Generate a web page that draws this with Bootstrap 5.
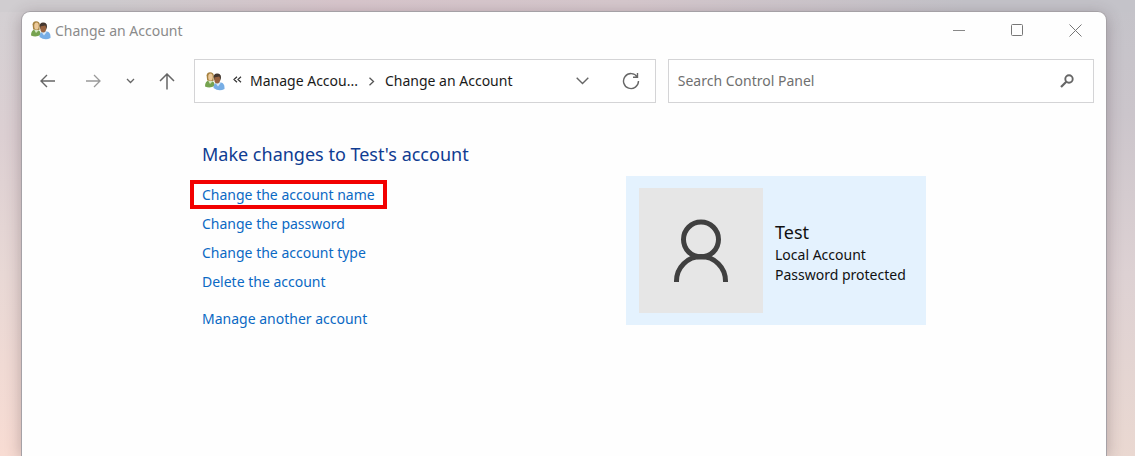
<!DOCTYPE html>
<html lang="en">
<head>
<meta charset="utf-8">
<meta name="viewport" content="width=device-width, initial-scale=1">
<title>Change an Account</title>
<link href="https://cdn.jsdelivr.net/npm/bootstrap@5.3.0/dist/css/bootstrap.min.css" rel="stylesheet">
<style>
  body {
    font: 14px/20px "Noto Sans", "Open Sans", sans-serif;
    color: #1a1a1a;
    background:
      linear-gradient(to bottom, #c4c3c9 0, #cbc5cb 25%, #ddd1d3 60%, #ead8d1 100%) right / 50% 100% no-repeat,
      linear-gradient(to bottom, #d3d0d3 0, #dccfd2 30%, #e8d8d5 60%, #f8dcd3 100%);
  }
  .desktop { min-height: 100vh; padding: 11px 28px 0 21px; background: linear-gradient(to right, #d0cdd0 10%, #d8c6cc 30%, #d6c8cd 55%, #c4c3c9 85%) top / 100% 12px no-repeat; }
  .app-window { background: #fefefe; border: 1px solid #a5a1a6; border-bottom: 0; border-radius: 9px 9px 0 0; box-shadow: 0 3px 16px rgba(60,40,50,.3); }
  .title-bar { height: 37px; padding: 0 2px 0 9px; color: #8b8b8b; }
  .tool-btn { border: 0; background: none; padding: 0; color: #666; display: flex; align-items: center; justify-content: center; height: 36px; }
  .tool-btn:hover { background: #eee; }
  .win-btn { width: 58px; }
  .nav-bar { padding: 10px 12px 0 8px; }
  .nav-btn { width: 36px; flex: none; }
  .nav-group { margin-right: 9px; gap: 1px; }
  .field-box { height: 44px; border: 1px solid #d4d4d6; background: #fff; min-width: 0; }
  .address-box { flex: 462 1 0; padding: 0 6px 0 10px; }
  .address-box a { color: #1a1a1a; }
  .drop-btn { margin-right: 12px; }
  .search-box { flex: 424 1 0; margin-left: 12px; padding: 0 8px 0 9px; }
  .search-box input { border: 0; outline: 0; background: none; min-width: 0; color: #333; padding: 0; }
  .search-box input::placeholder { color: #707070; opacity: 1; }
  .content-area { padding: 38px 24px 24px 168px; }
  .tasks { width: 436px; }
  .tasks h1 { font-size: 18px; line-height: 26px; color: #0f3c92; padding-left: 12px; margin: 0 0 13px; font-weight: 400; }
  .task-link { color: #0b69c4; line-height: 21px; padding: 0 8px; border: 4px solid transparent; }
  .task-link.marked { border-color: #f20000; }
  .tile { width: 300px; padding: 12px 13px; margin-top: 35px; background: #e4f2fe; color: #111; }
  .avatar { width: 124px; height: 125px; background: #e6e6e6; flex: none; }
  .account-name { font-size: 18px; line-height: 26px; }
  .account-info { padding: 2px 0 0 12px; }
</style>
</head>
<body>
<svg class="d-none" aria-hidden="true">
  <symbol id="users" viewBox="0 0 20 19">
    <path d="M0 14.500Q0 9 4 8.500L7 9Q10 10 9.500 14Q5 16.500 0 14.500z" fill="#76a350"/>
    <path d="M3 8.500L5 12 8 9z" fill="#d6e8c2"/>
    <path d="M1.600 3.500Q2 .3 5 .3Q8.800 .3 8.800 4L8.500 9 2.200 8.500z" fill="#a5813f"/>
    <ellipse cx="5.500" cy="5" rx="2.300" ry="3.500" fill="#ecc999"/>
    <path d="M8.500 16Q8.500 11 12 10.700L16 10.500Q19.800 11 19.500 17Q14 20 8.500 16z" fill="#77aee6"/>
    <path d="M10.500 11L13 14.500 16 10.500z" fill="#d9eafa"/>
    <path d="M8.600 5Q8.800 1.500 12 1.500Q16.200 1.400 16 6L15 9 9.500 8z" fill="#44372f"/>
    <ellipse cx="12.200" cy="7.500" rx="2.900" ry="3.900" fill="#986340"/>
    <path d="M9.300 5Q12 5.500 15.500 4L14.500 2.500 10.500 2.300z" fill="#44372f"/>
  </symbol>
</svg>
<div class="desktop d-flex">
  <main class="app-window flex-grow-1">
    <header class="title-bar d-flex align-items-center">
      <svg class="me-1" width="20" height="19" aria-hidden="true"><use href="#users"/></svg>
      <span class="flex-grow-1">Change an Account</span>
      <button type="button" class="tool-btn win-btn" aria-label="Minimize"><svg width="13" height="13" stroke="#888"><path d="M0 6.500H12"/></svg></button>
      <button type="button" class="tool-btn win-btn" aria-label="Maximize"><svg width="13" height="13" fill="none" stroke="#777"><rect x=".5" y=".5" width="11" height="11" rx="1"/></svg></button>
      <button type="button" class="tool-btn win-btn" aria-label="Close"><svg width="13" height="13" stroke="#777"><path d="M.5 .5L12.500 12.500M12.500 .5L.5 12.500"/></svg></button>
    </header>
    <nav class="nav-bar d-flex align-items-center" aria-label="Navigation">
      <div class="nav-group d-flex flex-shrink-0">
        <button type="button" class="tool-btn nav-btn" aria-label="Back"><svg width="16" height="14" fill="none" stroke="#666" stroke-width="1.400"><path d="M15 7H1.500M7 1L1 7L7 13"/></svg></button>
        <button type="button" class="tool-btn nav-btn ms-2" aria-label="Forward"><svg width="16" height="14" fill="none" stroke="#999" stroke-width="1.300"><path d="M1 7H14.500M9 1L15 7L9 13"/></svg></button>
        <button type="button" class="tool-btn nav-btn" aria-label="Recent locations"><svg width="9" height="6" fill="none" stroke="#666" stroke-width="1.300"><path d="M1 1L4.500 4.500L8 1"/></svg></button>
        <button type="button" class="tool-btn nav-btn" aria-label="Up"><svg width="16" height="17" fill="none" stroke="#666" stroke-width="1.500"><path d="M8 16.500V1.500M1 8L8 1L15 8"/></svg></button>
      </div>
      <div class="field-box address-box d-flex align-items-center">
        <svg class="flex-shrink-0" width="20" height="19" aria-hidden="true"><use href="#users"/></svg>
        <svg class="ms-2 mb-1 flex-shrink-0" width="9" height="7" fill="none" stroke="#333" stroke-width="1.200" aria-hidden="true"><path d="M4 .8L1 3.500L4 6.200M8 .8L5 3.500L8 6.200"/></svg>
        <a href="#" class="ms-2 text-decoration-none text-nowrap">Manage Accou...</a>
        <svg class="mx-2 flex-shrink-0" width="11" height="9" fill="none" stroke="#555" stroke-width="1.300" aria-hidden="true"><path d="M3.500 .8L7.500 4.500L3.500 8.200"/></svg>
        <a href="#" class="text-decoration-none text-nowrap flex-grow-1">Change an Account</a>
        <button type="button" class="tool-btn nav-btn drop-btn" aria-label="Previous locations"><svg width="13" height="8" fill="none" stroke="#666" stroke-width="1.400"><path d="M.7 .8L6.500 6.600L12.300 .8"/></svg></button>
        <button type="button" class="tool-btn nav-btn" aria-label="Refresh"><svg width="18" height="18" fill="none" stroke="#666" stroke-width="1.400"><path d="M15.300 5A7.500 7.500 0 1 0 16.500 9M15.500 1V5.300H11"/></svg></button>
      </div>
      <div class="field-box search-box d-flex align-items-center">
        <input type="search" class="flex-grow-1" aria-label="Search Control Panel" placeholder="Search Control Panel">
        <button type="button" class="tool-btn nav-btn" aria-label="Search"><svg width="14" height="14" fill="none" stroke="#666"><circle cx="9" cy="5" r="3.700" stroke-width="1.900"/><path d="M6.300 7.700L1 13" stroke-width="2.200"/></svg></button>
      </div>
    </nav>
    <div class="content-area d-flex align-items-start">
      <section class="tasks">
        <h1>Make changes to Test's account</h1>
        <div class="d-flex flex-column align-items-start">
          <a href="#" class="task-link marked text-decoration-none">Change the account name</a>
          <a href="#" class="task-link text-decoration-none">Change the password</a>
          <a href="#" class="task-link text-decoration-none">Change the account type</a>
          <a href="#" class="task-link text-decoration-none">Delete the account</a>
          <a href="#" class="task-link text-decoration-none mt-2">Manage another account</a>
        </div>
      </section>
      <section class="tile d-flex align-items-center" aria-label="Test's account">
        <div class="avatar d-flex align-items-center justify-content-center">
          <svg width="56" height="63" fill="none" stroke="#404040" stroke-width="5" aria-hidden="true"><circle cx="28" cy="20.500" r="17.500"/><path d="M3.500 63V62A24.500 24.500 0 0 1 52.500 62V63"/></svg>
        </div>
        <div class="account-info text-nowrap">
          <div class="account-name">Test</div>
          <div>Local Account</div>
          <div>Password protected</div>
        </div>
      </section>
    </div>
  </main>
</div>
<script src="https://cdn.jsdelivr.net/npm/bootstrap@5.3.0/dist/js/bootstrap.bundle.min.js"></script>
</body>
</html>
